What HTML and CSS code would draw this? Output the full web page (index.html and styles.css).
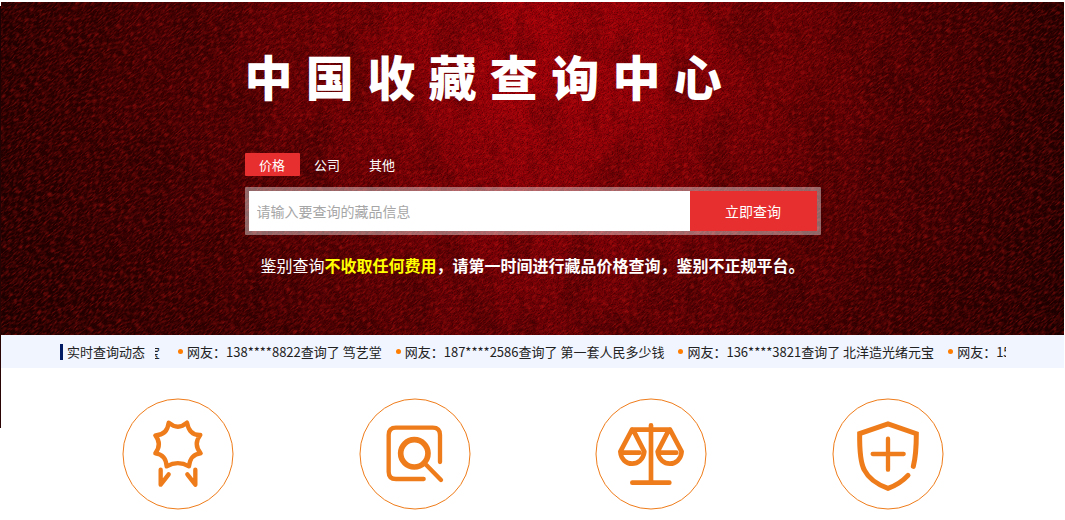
FILE: index.html
```html
<!DOCTYPE html>
<html lang="zh-CN">
<head>
<meta charset="utf-8">
<title>中国收藏查询中心</title>
<link rel="stylesheet" href="styles.css">
</head>
<body>
<div class="page">
  <header class="hero">
    <svg class="hero-texture" aria-hidden="true">
      <filter id="weave" x="0" y="0" width="100%" height="100%" color-interpolation-filters="sRGB">
        <feTurbulence type="fractalNoise" baseFrequency="0.18 0.75" numOctaves="2" seed="4"/>
        <feColorMatrix values="0 0 0 0 0.95  0 0 0 0 0.12  0 0 0 0 0.1  2.6 0 0 0 -1.1"/>
      </filter>
      <filter id="grain" x="0" y="0" width="100%" height="100%" color-interpolation-filters="sRGB">
        <feTurbulence type="fractalNoise" baseFrequency="0.8" numOctaves="2" seed="9"/>
        <feColorMatrix values="0 0 0 0 0.05  0 0 0 0 0  0 0 0 0 0  3 0 0 0 -1.2"/>
      </filter>
      <filter id="damask" x="0" y="0" width="100%" height="100%" color-interpolation-filters="sRGB">
        <feTurbulence type="fractalNoise" baseFrequency="0.03 0.016" numOctaves="3" seed="12"/>
        <feColorMatrix values="0 0 0 0 0.1  0 0 0 0 0  0 0 0 0 0  5 0 0 0 -2.3"/>
      </filter>
      <rect width="100%" height="100%" filter="url(#damask)" opacity="0.2"/>
      <rect width="100%" height="100%" filter="url(#grain)" opacity="0.36"/>
      <g transform="rotate(-40)"><rect x="-400" y="-200" width="2400" height="1800" filter="url(#weave)" opacity="0.38"/></g>
    </svg>
    <div class="hero-inner">
      <h1 class="title">中 国 收 藏 查 询 中 心</h1>
      <nav class="tabs">
        <button type="button" class="tab tab-active">价格</button>
        <button type="button" class="tab">公司</button>
        <button type="button" class="tab">其他</button>
      </nav>
      <form class="search">
        <input class="search-input" type="text" aria-label="藏品信息" placeholder="请输入要查询的藏品信息">
        <button class="search-button" type="button">立即查询</button>
      </form>
      <p class="notice">鉴别查询<b><em>不收取任何费用</em>，请第一时间进行藏品价格查询，鉴别不正规平台。</b></p>
    </div>
  </header>

  <section class="live">
    <h2 class="live-title">实时查询动态</h2>
    <div class="ticker">
      <span class="ticker-tail"><span>宝</span></span>
      <ul class="ticker-list">
        <li>网友：138****8822查询了 笃艺堂</li>
        <li>网友：187****2586查询了 第一套人民多少钱</li>
        <li>网友：136****3821查询了 北洋造光绪元宝</li>
        <li>网友：15</li>
      </ul>
    </div>
  </section>

  <main class="features">
    <svg class="icon" viewBox="38 25 336 336" role="img" aria-label="奖章">
      <circle class="ring" cx="206" cy="193" r="165"/>
      <path class="line" d="M178 99Q206 123 233 99Q240 138 273 136Q251 163 274 191Q243 193 239 230Q206 211 172 230Q170 195 138 191Q159 163 138 137Q174 136 178 99Z"/>
      <path class="line" d="M154 240V285L178 254M234 254L258 285V240"/>
    </svg>
    <svg class="icon" viewBox="27 25 336 336" role="img" aria-label="查询">
      <circle class="ring" cx="195" cy="193" r="165"/>
      <path class="line" d="M270 217V136Q270 114 248 114H138Q116 114 116 136V246Q116 268 138 268H221"/>
      <circle class="line lens" cx="193" cy="191" r="41"/>
      <path class="line" d="M226 223L273 271"/>
    </svg>
    <svg class="icon" viewBox="32 25 336 336" role="img" aria-label="天平">
      <circle class="ring" cx="200" cy="193" r="165"/>
      <path class="line scale" d="M200 107V279M144 279H255M143 120H257M143 120L108 186C112 234 174 234 180 186L146 120M254 120L220 186C226 234 288 234 292 186L257 120M112 189H165M224 189H276"/>
    </svg>
    <svg class="icon" viewBox="36 25 336 336" role="img" aria-label="保障">
      <circle class="ring" cx="204" cy="193" r="165"/>
      <path class="line shield" d="M280 230Q289 194 289 132L204 103L119 132Q118 213 133 241Q151 277 204 296Q240 283 264 257"/>
      <path class="line" d="M204 147V240M158 193H251"/>
    </svg>
  </main>
</div>
</body>
</html>
```
FILE: styles.css
```css
* { box-sizing: border-box; }

body {
  margin: 0;
  background: #fff linear-gradient(#1c0303, #2b0505) no-repeat 0 6px / 1px 422px;
  color: #222;
  font-family: "Noto Sans CJK SC", sans-serif;
  font-size: 13px;
}

button, input { font-family: inherit; border: 0; margin: 0; }

.page { padding: 2px 1px 0; }

.hero {
  position: relative;
  overflow: hidden;
  padding: 42px 16px 58px;
  background:
    linear-gradient(to bottom, rgba(20, 0, 0, 0) 30%, rgba(20, 0, 0, 0.4)),
    linear-gradient(to right, #260000, #490003 18%, #760005 34%, #a20009 48%, #9a0008 58%, #680004 76%, #480003 88%, #260000);
}

.hero-texture {
  position: absolute;
  inset: 0;
  width: 100%;
  height: 100%;
}

.hero-inner {
  position: relative;
  max-width: 576px;
  margin: 0 auto;
}

.title {
  margin: 0;
  color: #fff;
  font: 900 48px/72px "Liberation Sans", "Noto Sans CJK SC", sans-serif;
}

.tabs { display: flex; margin-top: 37px; }

.tab {
  min-width: 55px;
  height: 23px;
  padding: 0;
  border-radius: 1px;
  background: transparent;
  color: #fff;
  font-size: 13px;
  line-height: 23px;
}

.tab-active { background: #e82f2f; }

.search {
  display: flex;
  margin-top: 11px;
  padding: 4px;
  border-radius: 1px;
  background: rgba(255, 255, 255, 0.4);
}

.search-input {
  flex: 1;
  min-width: 0;
  height: 40px;
  padding: 0 8px;
  background: #fff;
  font-size: 14px;
}

.search-input::placeholder { color: #a6a6a6; opacity: 1; }

.search-button {
  width: 127px;
  height: 40px;
  padding: 0;
  background: #e82f2f;
  color: #fff;
  font-size: 14px;
}

.notice {
  margin: 18px 0 0;
  padding-left: 16px;
  color: #fff;
  font-size: 16px;
  line-height: 24px;
  white-space: nowrap;
}

.notice em { color: #ff0; font-style: normal; }

.live {
  display: flex;
  align-items: center;
  padding: 0 58px 0 59px;
  height: 33px;
  background: #f1f5ff;
}

.live-title {
  flex: none;
  margin: 0;
  padding-left: 4px;
  border-left: 3px solid #001a66;
  font-size: 13px;
  font-weight: 400;
  line-height: 16px;
}

.ticker {
  display: flex;
  flex: 1;
  min-width: 0;
  margin-left: 10px;
  overflow: hidden;
  line-height: 20px;
  white-space: nowrap;
}

.ticker-tail {
  display: flex;
  flex: none;
  justify-content: flex-end;
  width: 5px;
  overflow: hidden;
}

.ticker-list {
  display: flex;
  gap: 14px;
  margin: 0;
  padding: 0 0 0 18px;
  list-style: none;
}

.ticker-list li { display: flex; align-items: center; gap: 4px; flex: none; }

.ticker-list li::before {
  content: "";
  width: 5px;
  height: 5px;
  border-radius: 50%;
  background: #ff7d00;
}

.features {
  display: grid;
  grid-template-columns: repeat(4, 1fr);
  justify-items: center;
  padding: 30px 58px 8px 59px;
}

.icon { width: 112px; height: 112px; }

.ring { fill: none; stroke: #ef7c1a; stroke-width: 3; }

.line {
  fill: none;
  stroke: #ef7c1a;
  stroke-width: 13;
  stroke-linecap: round;
  stroke-linejoin: round;
}

.lens { stroke-width: 17; }
.scale { stroke-width: 14; }
.shield { stroke-width: 15; stroke-linejoin: miter; }
```
